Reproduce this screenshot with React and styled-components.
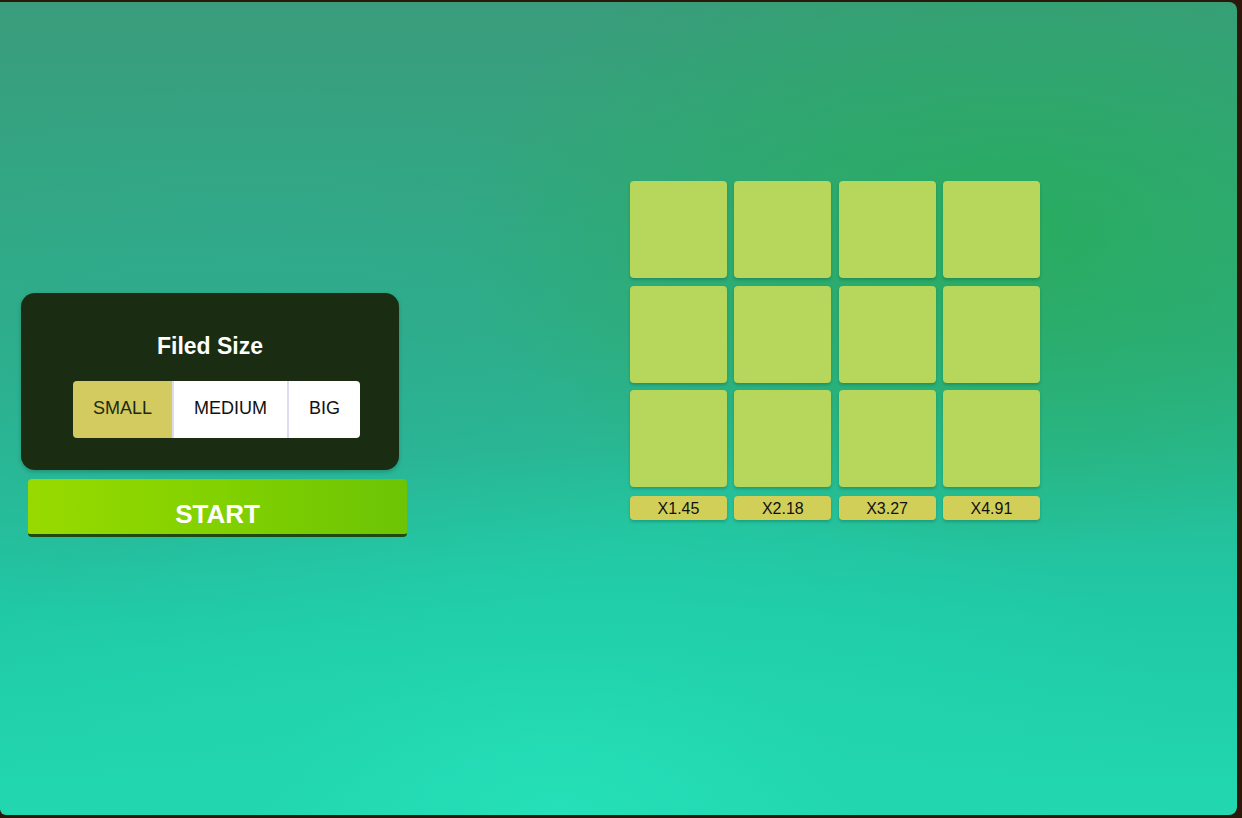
import { useState } from "react";
import styled, { createGlobalStyle } from "styled-components";

const multipliers = ["X1.45", "X2.18", "X3.27", "X4.91"];
const sizes = ["SMALL", "MEDIUM", "BIG"];

function App() {
  const [size, setSize] = useState("SMALL");

  return (
    <>
      <GlobalStyle />
      <Frame>
        <Screen>
          <LeftColumn>
            <SettingsCard>
              <CardTitle>Filed Size</CardTitle>
              <Segments>
                {sizes.map((s) => (
                  <Segment key={s} $active={size === s} onClick={() => setSize(s)}>
                    {s}
                  </Segment>
                ))}
              </Segments>
            </SettingsCard>
            <StartButton>START</StartButton>
          </LeftColumn>

          <Board>
            {Array.from({ length: 12 }).map((_, i) => (
              <Tile key={i} />
            ))}
            {multipliers.map((m) => (
              <Multiplier key={m}>{m}</Multiplier>
            ))}
          </Board>
        </Screen>
      </Frame>
    </>
  );
}

const GlobalStyle = createGlobalStyle`
  html, body {
    margin: 0;
    padding: 0;
    background: #2b180b;
    font-family: "Liberation Sans", Arial, sans-serif;
  }
`;

const Frame = styled.div`
  height: 818px;
  box-sizing: border-box;
  padding: 2px 5px 3px 0;
  background: #2b180b;
`;

const Screen = styled.div`
  height: 100%;
  border-radius: 0 8px 8px 6px;
  display: flex;
  align-items: flex-start;
  background:
    radial-gradient(ellipse 55% 45% at 45% 100%, #25e0b8 0%, rgba(34, 214, 176, 0.6) 45%, rgba(34, 214, 176, 0) 100%),
    radial-gradient(ellipse 45% 40% at 82% 28%, rgba(40, 172, 92, 0.9) 0%, rgba(40, 172, 92, 0) 100%),
    radial-gradient(ellipse 40% 35% at 20% 45%, rgba(46, 170, 150, 0.6) 0%, rgba(46, 170, 150, 0) 100%),
    linear-gradient(180deg, #3a9c7c 0%, #2eae86 40%, #20c9a6 75%, #22d8b0 100%);
`;

const LeftColumn = styled.div`
  margin: 291px 0 0 21px;
  display: flex;
  flex-direction: column;
`;

const SettingsCard = styled.div`
  width: 378px;
  height: 177px;
  box-sizing: border-box;
  background: #1a2d12;
  border-radius: 14px;
  box-shadow: 0 2px 4px rgba(0, 0, 0, 0.2);
  display: flex;
  flex-direction: column;
  align-items: center;
  padding-top: 40px;
`;

const CardTitle = styled.div`
  color: #ffffff;
  font-size: 23px;
  font-weight: 700;
  line-height: 26px;
`;

const Segments = styled.div`
  display: flex;
  margin: 22px 0 0 13px;
  height: 57px;
  border-radius: 4px;
  overflow: hidden;
`;

const Segment = styled.div`
  padding: 0 20px 2px;
  display: flex;
  align-items: center;
  font-size: 18px;
  color: ${(p) => (p.$active ? "#1d2a12" : "#111111")};
  background: ${(p) => (p.$active ? "#d3cb5f" : "#ffffff")};
  cursor: pointer;
  & + & {
    border-left: 2px solid #dcdcf0;
  }
`;

const StartButton = styled.div`
  margin: 9px 0 0 7px;
  width: 379px;
  height: 40px;
  padding-top: 15px;
  border-bottom: 3px solid #1d4a10;
  border-radius: 4px;
  background: linear-gradient(90deg, #98da00 0%, #80d000 55%, #6cc405 100%);
  color: #ffffff;
  font-size: 26px;
  font-weight: 700;
  display: flex;
  align-items: center;
  justify-content: center;
`;

const Board = styled.div`
  margin: 179px 0 0 223px;
  display: grid;
  grid-template-columns: repeat(4, 97px);
  column-gap: 7.3px;
  row-gap: 7.5px;
`;

const Tile = styled.div`
  height: 97px;
  background: #b6d65c;
  border-radius: 4px;
  box-shadow: 0 2px 3px rgba(0, 60, 40, 0.25);
`;

const Multiplier = styled.div`
  margin-top: 1px;
  height: 24px;
  background: #d2cf58;
  border-radius: 4px;
  box-shadow: 0 2px 3px rgba(0, 60, 40, 0.25);
  display: flex;
  align-items: center;
  justify-content: center;
  padding-top: 3px;
  box-sizing: border-box;
  font-size: 16px;
  color: #111111;
`;

export default App;
